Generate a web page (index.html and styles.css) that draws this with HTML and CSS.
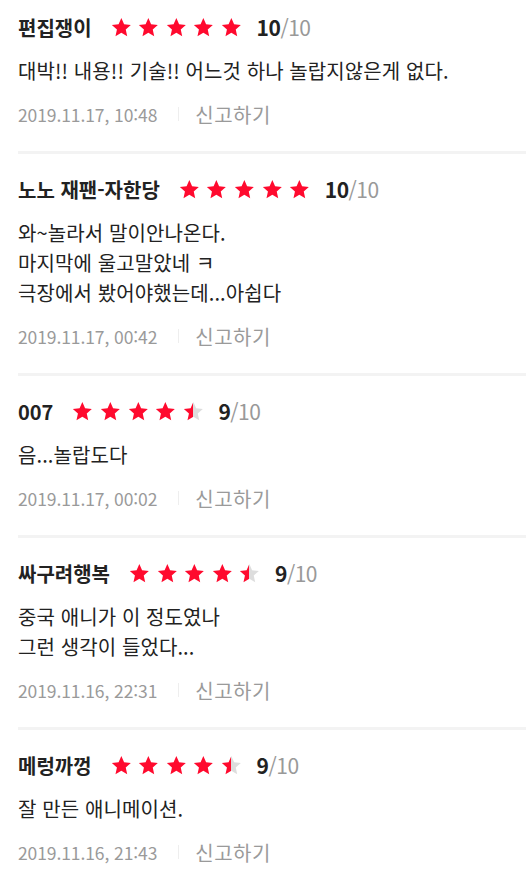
FILE: index.html
```html
<!DOCTYPE html>
<html lang="ko">
<head>
<meta charset="utf-8">
<link rel="stylesheet" href="styles.css">
</head>
<body>
<svg width="0" height="0" class="defs">
  <defs>
    <polygon id="star" points="12,1.2 15.2,8.4 23,9.2 17.1,14.4 18.8,22.2 12,18.2 5.2,22.2 6.9,14.4 1,9.2 8.8,8.4"/>
    <linearGradient id="half" x1="0" x2="1" y1="0" y2="0">
      <stop offset="50%" stop-color="#ff0a2e"/>
      <stop offset="50%" stop-color="#dddddd"/>
    </linearGradient>
  </defs>
</svg>
<ul class="reviews">
  <li class="review">
    <div class="head">
      <span class="name">편집쟁이</span>
      <span class="stars">
        <svg class="star" viewBox="0 0 24 24"><use href="#star"/></svg>
        <svg class="star" viewBox="0 0 24 24"><use href="#star"/></svg>
        <svg class="star" viewBox="0 0 24 24"><use href="#star"/></svg>
        <svg class="star" viewBox="0 0 24 24"><use href="#star"/></svg>
        <svg class="star" viewBox="0 0 24 24"><use href="#star"/></svg>
      </span>
      <span class="score"><b>10</b>/10</span>
    </div>
    <p class="body">대박!! 내용!! 기술!! 어느것 하나 놀랍지않은게 없다.</p>
    <div class="meta"><span class="date">2019.11.17, 10:48</span><span class="sep"></span><span class="report">신고하기</span></div>
  </li>
  <li class="review">
    <div class="head">
      <span class="name">노노 재팬-자한당</span>
      <span class="stars">
        <svg class="star" viewBox="0 0 24 24"><use href="#star"/></svg>
        <svg class="star" viewBox="0 0 24 24"><use href="#star"/></svg>
        <svg class="star" viewBox="0 0 24 24"><use href="#star"/></svg>
        <svg class="star" viewBox="0 0 24 24"><use href="#star"/></svg>
        <svg class="star" viewBox="0 0 24 24"><use href="#star"/></svg>
      </span>
      <span class="score"><b>10</b>/10</span>
    </div>
    <p class="body">와~놀라서 말이안나온다.<br>마지막에 울고말았네 ㅋ<br>극장에서 봤어야했는데...아쉽다</p>
    <div class="meta"><span class="date">2019.11.17, 00:42</span><span class="sep"></span><span class="report">신고하기</span></div>
  </li>
  <li class="review">
    <div class="head">
      <span class="name">007</span>
      <span class="stars">
        <svg class="star" viewBox="0 0 24 24"><use href="#star"/></svg>
        <svg class="star" viewBox="0 0 24 24"><use href="#star"/></svg>
        <svg class="star" viewBox="0 0 24 24"><use href="#star"/></svg>
        <svg class="star" viewBox="0 0 24 24"><use href="#star"/></svg>
        <svg class="star half" viewBox="0 0 24 24"><use href="#star"/></svg>
      </span>
      <span class="score"><b>9</b>/10</span>
    </div>
    <p class="body">음...놀랍도다</p>
    <div class="meta"><span class="date">2019.11.17, 00:02</span><span class="sep"></span><span class="report">신고하기</span></div>
  </li>
  <li class="review">
    <div class="head">
      <span class="name">싸구려행복</span>
      <span class="stars">
        <svg class="star" viewBox="0 0 24 24"><use href="#star"/></svg>
        <svg class="star" viewBox="0 0 24 24"><use href="#star"/></svg>
        <svg class="star" viewBox="0 0 24 24"><use href="#star"/></svg>
        <svg class="star" viewBox="0 0 24 24"><use href="#star"/></svg>
        <svg class="star half" viewBox="0 0 24 24"><use href="#star"/></svg>
      </span>
      <span class="score"><b>9</b>/10</span>
    </div>
    <p class="body">중국 애니가 이 정도였나<br>그런 생각이 들었다...</p>
    <div class="meta"><span class="date">2019.11.16, 22:31</span><span class="sep"></span><span class="report">신고하기</span></div>
  </li>
  <li class="review">
    <div class="head">
      <span class="name">메렁까껑</span>
      <span class="stars">
        <svg class="star" viewBox="0 0 24 24"><use href="#star"/></svg>
        <svg class="star" viewBox="0 0 24 24"><use href="#star"/></svg>
        <svg class="star" viewBox="0 0 24 24"><use href="#star"/></svg>
        <svg class="star" viewBox="0 0 24 24"><use href="#star"/></svg>
        <svg class="star half" viewBox="0 0 24 24"><use href="#star"/></svg>
      </span>
      <span class="score"><b>9</b>/10</span>
    </div>
    <p class="body">잘 만든 애니메이션.</p>
    <div class="meta"><span class="date">2019.11.16, 21:43</span><span class="sep"></span><span class="report">신고하기</span></div>
  </li>
</ul>
</body>
</html>
```

FILE: styles.css
```css
html, body {
  margin: 0;
  padding: 0;
  background: #fff;
}
body {
  font-family: "Noto Sans CJK KR", "Noto Sans", sans-serif;
  color: #222;
}
.defs {
  position: absolute;
  width: 0;
  height: 0;
}
.reviews {
  list-style: none;
  margin: 0;
  padding: 0 0 0 18px;
}
.review {
  padding: 20px 0 22px 0;
  border-bottom: 3px solid #f3f3f3;
}
.review:first-child {
  padding-top: 12px;
}
.head {
  display: flex;
  align-items: center;
  height: 30px;
}
.name {
  font-size: 20px;
  font-weight: 700;
  color: #222;
  margin-right: 19px;
}
.stars {
  display: flex;
  gap: 6.9px;
  margin-right: 15px;
}
.star {
  width: 20.7px;
  height: 20.7px;
  fill: #ff0a2e;
  display: block;
}
.star.half {
  fill: url(#half);
}
.score {
  font-size: 21px;
  color: #999;
  letter-spacing: -0.5px;
}
.score b {
  color: #222;
  font-weight: 700;
}
.body {
  margin: 14px 0 0 0;
  font-size: 20px;
  line-height: 30px;
  color: #222;
  letter-spacing: 0.1px;
}
.meta {
  display: flex;
  align-items: center;
  height: 30px;
  margin-top: 13px;
}
.date {
  font-size: 17.5px;
  color: #9a9a9a;
  letter-spacing: -0.1px;
}
.sep {
  width: 1px;
  height: 14px;
  background: #eeeeee;
  margin: 0 16px 0 21px;
}
.report {
  font-size: 20px;
  color: #9a9a9a;
  letter-spacing: 0.5px;
}
```
